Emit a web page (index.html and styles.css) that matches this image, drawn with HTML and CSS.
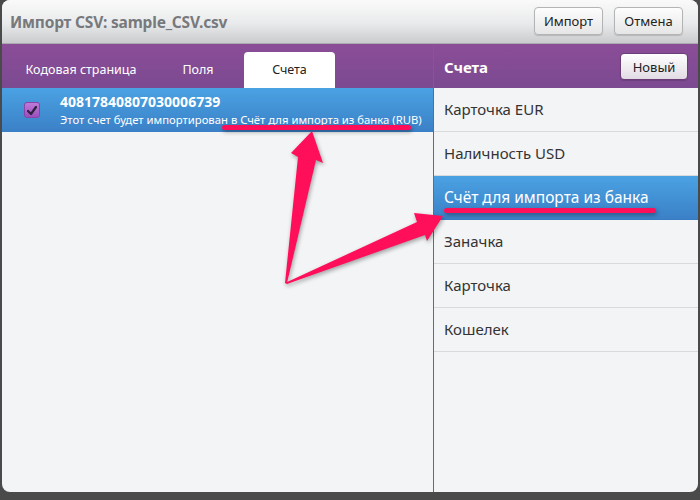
FILE: index.html
```html
<!DOCTYPE html>
<html lang="ru">
<head>
    <meta charset="UTF-8">
    <title>Импорт CSV</title>
    <link rel="stylesheet" href="styles.css">
</head>
<body>
    <div class="window">
        <div class="title-bar">
            <h1>Импорт CSV: sample_CSV.csv</h1>
            <div class="title-actions">
                <button class="btn">Импорт</button>
                <button class="btn">Отмена</button>
            </div>
        </div>

        <div class="main">
            <div class="left-pane">
                <div class="tabs">
                    <div class="tab tab-wide">Кодовая страница</div>
                    <div class="tab">Поля</div>
                    <div class="tab active">Счета</div>
                </div>
                <div class="import-row">
                    <div class="check">
                        <svg width="10" height="9" viewBox="0 0 10 9"><path d="M1 5 L4 8 L9 1" fill="none" stroke="#2d2240" stroke-width="2.2" stroke-linecap="round" stroke-linejoin="round"/></svg>
                    </div>
                    <div class="import-text">
                        <div class="acc-number">40817840807030006739</div>
                        <div class="acc-note">Этот счет будет импортирован в Счёт для импорта из банка (RUB)</div>
                    </div>
                </div>
            </div>

            <div class="right-pane">
                <div class="pane-header">
                    <span>Счета</span>
                    <button class="btn btn-small">Новый</button>
                </div>
                <ul class="acc-list">
                    <li>Карточка EUR</li>
                    <li>Наличность USD</li>
                    <li class="selected">Счёт для импорта из банка</li>
                    <li>Заначка</li>
                    <li>Карточка</li>
                    <li>Кошелек</li>
                </ul>
            </div>
        </div>

        <!-- annotation arrows -->
        <svg class="marks" width="696" height="492" viewBox="2 0 696 492">
            <g fill="#ff0f5a">
                <rect x="222" y="125" width="189" height="5" rx="2.5"/>
                <rect x="444" y="208" width="212" height="5" rx="2.5"/>
                <polygon points="285,283 298,157 291,153 312,131 323,163 316,160 287,283"/>
                <polygon points="285,283 417,222 414,213 443,216 427,241 425,235 287,284"/>
            </g>
        </svg>
    </div>
</body>
</html>
```

FILE: styles.css
```css
* {
    box-sizing: border-box;
    margin: 0;
    padding: 0;
}

body {
    width: 700px;
    height: 500px;
    background: #4a4a4a;
    font-family: 'Noto Sans', 'Open Sans', sans-serif;
    overflow: hidden;
}

.window {
    position: relative;
    width: 696px;
    height: 492px;
    margin-left: 2px;
    border-radius: 8px;
    overflow: hidden;
    background: #f3f4f6;
    display: flex;
    flex-direction: column;
}

.title-bar {
    height: 44px;
    display: flex;
    align-items: center;
    justify-content: space-between;
    padding: 0 15px 0 8px;
    background: linear-gradient(#fafafa, #e9eaeb 55%, #c9cbce);
    border-bottom: 1px solid #a9abae;
}

.title-bar h1 {
    font-size: 15.5px;
    font-weight: 700;
    color: #77797c;
    letter-spacing: -0.2px;
}

.title-actions {
    display: flex;
    gap: 11px;
    margin-top: -1px;
}

.btn {
    width: 69px;
    height: 28px;
    font-family: inherit;
    font-size: 13px;
    color: #222;
    background: linear-gradient(#fdfdfd, #e6e6e6);
    border: 1px solid #b4b4b4;
    border-radius: 4px;
    box-shadow: 0 1px 1px rgba(0, 0, 0, 0.15);
}

.btn-small {
    width: 68px;
    height: 27px;
    background: linear-gradient(#ffffff, #e2dbe4);
    border-color: #6a3f78;
}

.main {
    flex: 1;
    display: flex;
}

.left-pane {
    width: 431px;
}

.tabs {
    height: 44px;
    display: flex;
    align-items: flex-end;
    padding-left: 8px;
    background: linear-gradient(#8b4d97, #7b4a91);
}

.tab {
    width: 92px;
    height: 36px;
    line-height: 36px;
    text-align: center;
    font-size: 12.5px;
    color: #fff;
}

.tab-wide {
    width: 142px;
}

.tab.active {
    width: 91px;
    background: #fff;
    color: #222;
    border-radius: 4px 4px 0 0;
}

.import-row {
    height: 44px;
    display: flex;
    align-items: center;
    gap: 20px;
    padding-left: 22px;
    background: linear-gradient(#4aa2e3, #3b80c7);
    color: #fff;
}

.check {
    width: 16px;
    height: 16px;
    display: flex;
    align-items: center;
    justify-content: center;
    border-radius: 3px;
    background: linear-gradient(#c07ad8, #9a4fbc);
    border: 1px solid #8a44a8;
}

.acc-number {
    font-size: 14px;
    font-weight: 700;
    line-height: 18px;
}

.acc-note {
    font-size: 11.3px;
    line-height: 17px;
}

.right-pane {
    flex: 1;
    border-left: 1px solid #6b6b6b;
}

.pane-header {
    height: 44px;
    display: flex;
    align-items: center;
    justify-content: space-between;
    padding: 1px 10px 0 10px;
    background: linear-gradient(#8b4d97, #7b4a91);
    color: #fff;
    font-size: 15px;
    font-weight: 700;
}

.acc-list {
    list-style: none;
}

.acc-list li {
    height: 44px;
    line-height: 43px;
    padding-left: 10px;
    font-size: 15px;
    color: #333;
    border-bottom: 1px solid #d9dadc;
}

.acc-list li.selected {
    background: linear-gradient(#4aa2e3, #3b80c7);
    color: #fff;
    font-size: 15.5px;
    border-bottom-color: #3a7cc2;
}

.marks {
    position: absolute;
    top: 0;
    left: 0;
    pointer-events: none;
    filter: drop-shadow(1px 2px 2px rgba(0, 0, 0, 0.35));
}
```
